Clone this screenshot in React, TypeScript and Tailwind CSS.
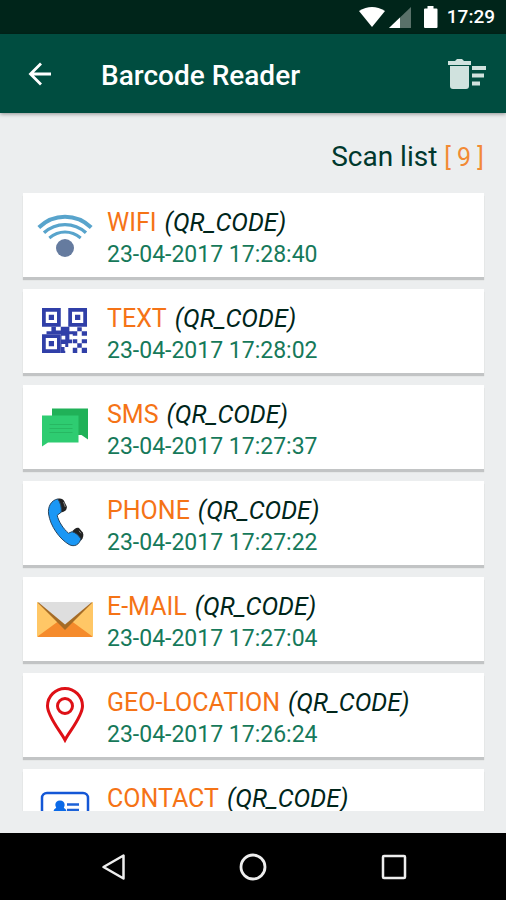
import type { ReactNode } from 'react';

type Scan = {
  kind: string;
  time: string;
  icon: ReactNode;
};

function WifiIcon() {
  return (
    <svg viewBox="0 0 60 60" className="w-[60px] h-[60px]" fill="none" stroke="#58a4cc" strokeWidth="3.4">
      <path d="M3.8 22.5Q15 11.8 30 11.8T56.2 22.5" strokeWidth="4" />
      <path d="M9 27.8Q18 19.6 30 19.6T51 27.8" />
      <path d="M14.3 33Q21.5 27 30 27T45.7 33" strokeWidth="3" />
      <circle cx="30" cy="43" r="9" fill="#657b9f" stroke="none" />
    </svg>
  );
}

function QrIcon() {
  return (
    <svg viewBox="-1.87 -1.87 16 16" className="w-[60px] h-[60px]" fill="#303fa8">
      <path fillRule="evenodd" d="M0 0h5v5H0zM1 1v3h3V1zM1.8 1.8h1.4v1.4H1.8z" />
      <path fillRule="evenodd" d="M7 0h5v5H7zM8 1v3h3V1zM8.8 1.8h1.4v1.4H8.8z" />
      <path fillRule="evenodd" d="M0 7h5v5H0zM1 8v3h3V8zM1.8 8.8h1.4v1.4H1.8z" />
      <path d="M2.5 5h1.2v1H5V5h2.3v1.2h1V7H7.3v1.4H8v1H7v1H6v1h.2v.6H5V7H1.2v-.8h1.3z" />
      <path d="M9.4 5.1h1.2v1.1H9.4zM8.2 6.2h1.2v1.2H8.2zM10.6 6.2H12v1.2h-1.4zM8.2 8.3h1.2v1.1H8.2zM9.4 9.4h1.2v1.2H9.4zM10.6 8.3H12v1.1h-1.4zM8.2 10.6h1.2V12H8.2zM10.6 10.6H12V12h-1.4z" />
      <path d="M5.2 7.4h1v1h-1zM5.2 9.6h1v.8h-1z" fill="#fff" />
    </svg>
  );
}

function SmsIcon() {
  return (
    <svg viewBox="0 0 60 60" className="w-[60px] h-[60px]">
      <path d="M17 11.5h36v31l-6.5-4.5H17z" fill="#20b158" />
      <path d="M7 18.5h36.5v27H13L7 49.5z" fill="#2ecc71" />
      <path d="M14.5 27.5h23M14.5 31.5h23M14.5 35.5h23" stroke="#27b862" strokeWidth="1.2" />
    </svg>
  );
}

function PhoneIcon() {
  return (
    <svg viewBox="0 0 60 60" className="w-[60px] h-[60px]" strokeLinejoin="round">
      <path d="M22.5 5.8C26 5 28 6 29.2 8.2L31.8 13.5C32.2 16 30.5 18 28 19L23 20Z" fill="#222" />
      <path d="M37 39.5C39 35.5 41.5 34.2 44 35L47.8 39.5C49 42 48.3 44.5 46.5 47L40 51Z" fill="#222" />
      <path
        d="M22.8 6C16.5 7 12.5 13.5 13.6 21C15.3 33 24.5 46 34 51.5C39.5 54.5 44.5 51.5 45.8 45.8C43.5 42 40.5 39.5 37 38.7L33.5 40.2C28.5 36 23.5 28.5 22.2 22.3L26.2 19.2C26.8 14.5 25.5 9.8 22.8 6Z"
        fill="#1a97f5"
        stroke="#28455f"
        strokeWidth="1"
      />
      <path d="M28.5 9l1.8 5M44 37.8l2 2.5" stroke="#888" strokeWidth="1" />
    </svg>
  );
}

function MailIcon() {
  return (
    <svg viewBox="0 0 60 60" className="w-[60px] h-[60px]">
      <rect x="2" y="13" width="56" height="35" rx="1" fill="#ffc766" />
      <path d="M2.5 47.5L23 32.5H37L57.5 47.5L56.5 48H3.5Z" fill="#f58b2c" />
      <path d="M2.5 13.5L30 41L57.5 13.5Z" fill="#a66c26" />
      <path d="M3 13H57L30 35.5Z" fill="#dedede" />
    </svg>
  );
}

function PinIcon() {
  return (
    <svg viewBox="0 0 60 60" className="w-[60px] h-[60px]" fill="none" stroke="#de1016" strokeWidth="3">
      <path d="M30 55C26 47 12.5 31.5 12.5 21A17.5 17.5 0 0 1 47.5 21C47.5 31.5 34 47 30 55Z" />
      <circle cx="30" cy="21" r="7.5" />
    </svg>
  );
}

function ContactIcon() {
  return (
    <svg viewBox="0 0 60 60" className="w-[60px] h-[60px]" fill="none" stroke="#1457d6" strokeWidth="2.5">
      <rect x="7" y="12" width="46" height="37" rx="5" />
      <path d="M25 19.5c3.2 0 5 2.2 4.6 5l-.8 2.5c2.2 1 2.7 2 2.7 5H18.5c0-3 .5-4 2.7-5l-.8-2.5c-.4-2.8 1.400-5 4.600-5z" fill="#0b6ae8" stroke="none" />
      <path d="M32 23.5h12M32 29h12M19 40h25" stroke="#1c62d8" />
    </svg>
  );
}

const scans: Scan[] = [
  { kind: 'WIFI', time: '23-04-2017 17:28:40', icon: <WifiIcon /> },
  { kind: 'TEXT', time: '23-04-2017 17:28:02', icon: <QrIcon /> },
  { kind: 'SMS', time: '23-04-2017 17:27:37', icon: <SmsIcon /> },
  { kind: 'PHONE', time: '23-04-2017 17:27:22', icon: <PhoneIcon /> },
  { kind: 'E-MAIL', time: '23-04-2017 17:27:04', icon: <MailIcon /> },
  { kind: 'GEO-LOCATION', time: '23-04-2017 17:26:24', icon: <PinIcon /> },
  { kind: 'CONTACT', time: '', icon: <ContactIcon /> },
];

function StatusBar() {
  return (
    <div className="h-[34px] shrink-0 bg-[#00251a] flex items-center justify-end pr-[11px] text-white">
      <svg viewBox="0 0 26 22" className="w-[26px] h-[22px] mr-1" fill="currentColor">
        <path d="M0 5Q13-3 26 5L13 21Z" />
      </svg>
      <svg viewBox="0 0 22 22" className="w-[22px] h-[22px] mr-3" fill="currentColor">
        <path d="M0 22L22 1V22Z" opacity=".35" />
        <path d="M0 22L11 11.5V22Z" />
      </svg>
      <svg viewBox="0 0 16 22" className="w-4 h-[22px] mr-2" fill="currentColor">
        <path d="M2 2.5h2.5V0h6v2.5h3a1 1 0 0 1 1 1V21a1 1 0 0 1-1 1H2a1 1 0 0 1-1-1V3.500a1 1 0 0 1 1-1z" />
      </svg>
      <span className="text-[19px] leading-6 font-medium">17:29</span>
    </div>
  );
}

function AppBar() {
  return (
    <header className="relative h-[79px] shrink-0 bg-[#004d40] flex items-center pl-6 pr-5 shadow-[0_1px_4px_rgba(0,0,0,0.4)]">
      <button aria-label="Back" className="w-8 h-8 text-white">
        <svg viewBox="0 0 32 32" className="w-8 h-8" fill="none" stroke="currentColor" strokeWidth="2.8">
          <path d="M27 16H7M17 5.5L6.5 16L17 26.5" />
        </svg>
      </button>
      <h1 className="ml-[45px] flex-1 text-[28px] leading-8 pt-1 font-medium text-white">Barcode Reader</h1>
      <button aria-label="Clear list" className="text-[#d0e2de]">
        <svg viewBox="0 0 38 32" className="w-[38px] h-8" fill="currentColor">
          <path d="M0 3h7l2-2h5l2 2h7v4H0zM2 8h19v20a3 3 0 0 1-3 3H5a3 3 0 0 1-3-3z" />
          <path d="M24 8h14v4H24zM24 15.5h12v4H24zM24 23.5h8v4h-8z" />
        </svg>
      </button>
    </header>
  );
}

function ScanCard({ scan }: { scan: Scan }) {
  return (
    <li className="h-[84px] shrink-0 bg-white flex items-center shadow-[0_3px_1px_#c2c4c5]">
      <div className="w-[84px] shrink-0 flex justify-center">{scan.icon}</div>
      <div className="h-16 pt-1">
        <p className="flex gap-2 text-[25px] leading-8 text-[#00251a] whitespace-nowrap">
          <span className="text-[#f57316]">{scan.kind}</span>
          <i>(QR_CODE)</i>
        </p>
        <p className="text-[23px] leading-8 text-[#16795a] whitespace-nowrap">{scan.time}</p>
      </div>
    </li>
  );
}

function NavBar() {
  return (
    <nav className="h-[67px] shrink-0 bg-black flex items-center justify-between px-[97px] text-[#eeeeee]">
      <button aria-label="Back">
        <svg viewBox="0 0 30 30" className="w-[30px] h-[30px]" fill="none" stroke="currentColor" strokeWidth="2.5" strokeLinejoin="round">
          <path d="M26.5 3.5V26.5L6.5 15Z" />
        </svg>
      </button>
      <button aria-label="Home">
        <svg viewBox="0 0 30 30" className="w-[30px] h-[30px]" fill="none" stroke="currentColor" strokeWidth="2.8">
          <circle cx="15" cy="15" r="12" />
        </svg>
      </button>
      <button aria-label="Recent apps">
        <svg viewBox="0 0 30 30" className="w-[30px] h-[30px]" fill="none" stroke="currentColor" strokeWidth="2.5">
          <rect x="4" y="4" width="22" height="22" rx="1" />
        </svg>
      </button>
    </nav>
  );
}

export default function App() {
  return (
    <div className="h-screen flex flex-col bg-[#eceeef] font-['Roboto',sans-serif]">
      <StatusBar />
      <AppBar />
      <main className="flex-1 min-h-0 flex flex-col pt-6 pb-[22px]">
        <h2 className="px-[22px] text-right text-[28px] leading-10 text-[#00382d]">
          Scan list <span className="text-[25px] text-[#f28a35]">[ 9 ]</span>
        </h2>
        <ul className="flex-1 min-h-0 mt-[15px] pl-[23px] pr-[22px] flex flex-col gap-3 overflow-hidden">
          {scans.map((scan) => (
            <ScanCard key={scan.kind} scan={scan} />
          ))}
        </ul>
      </main>
      <NavBar />
    </div>
  );
}
